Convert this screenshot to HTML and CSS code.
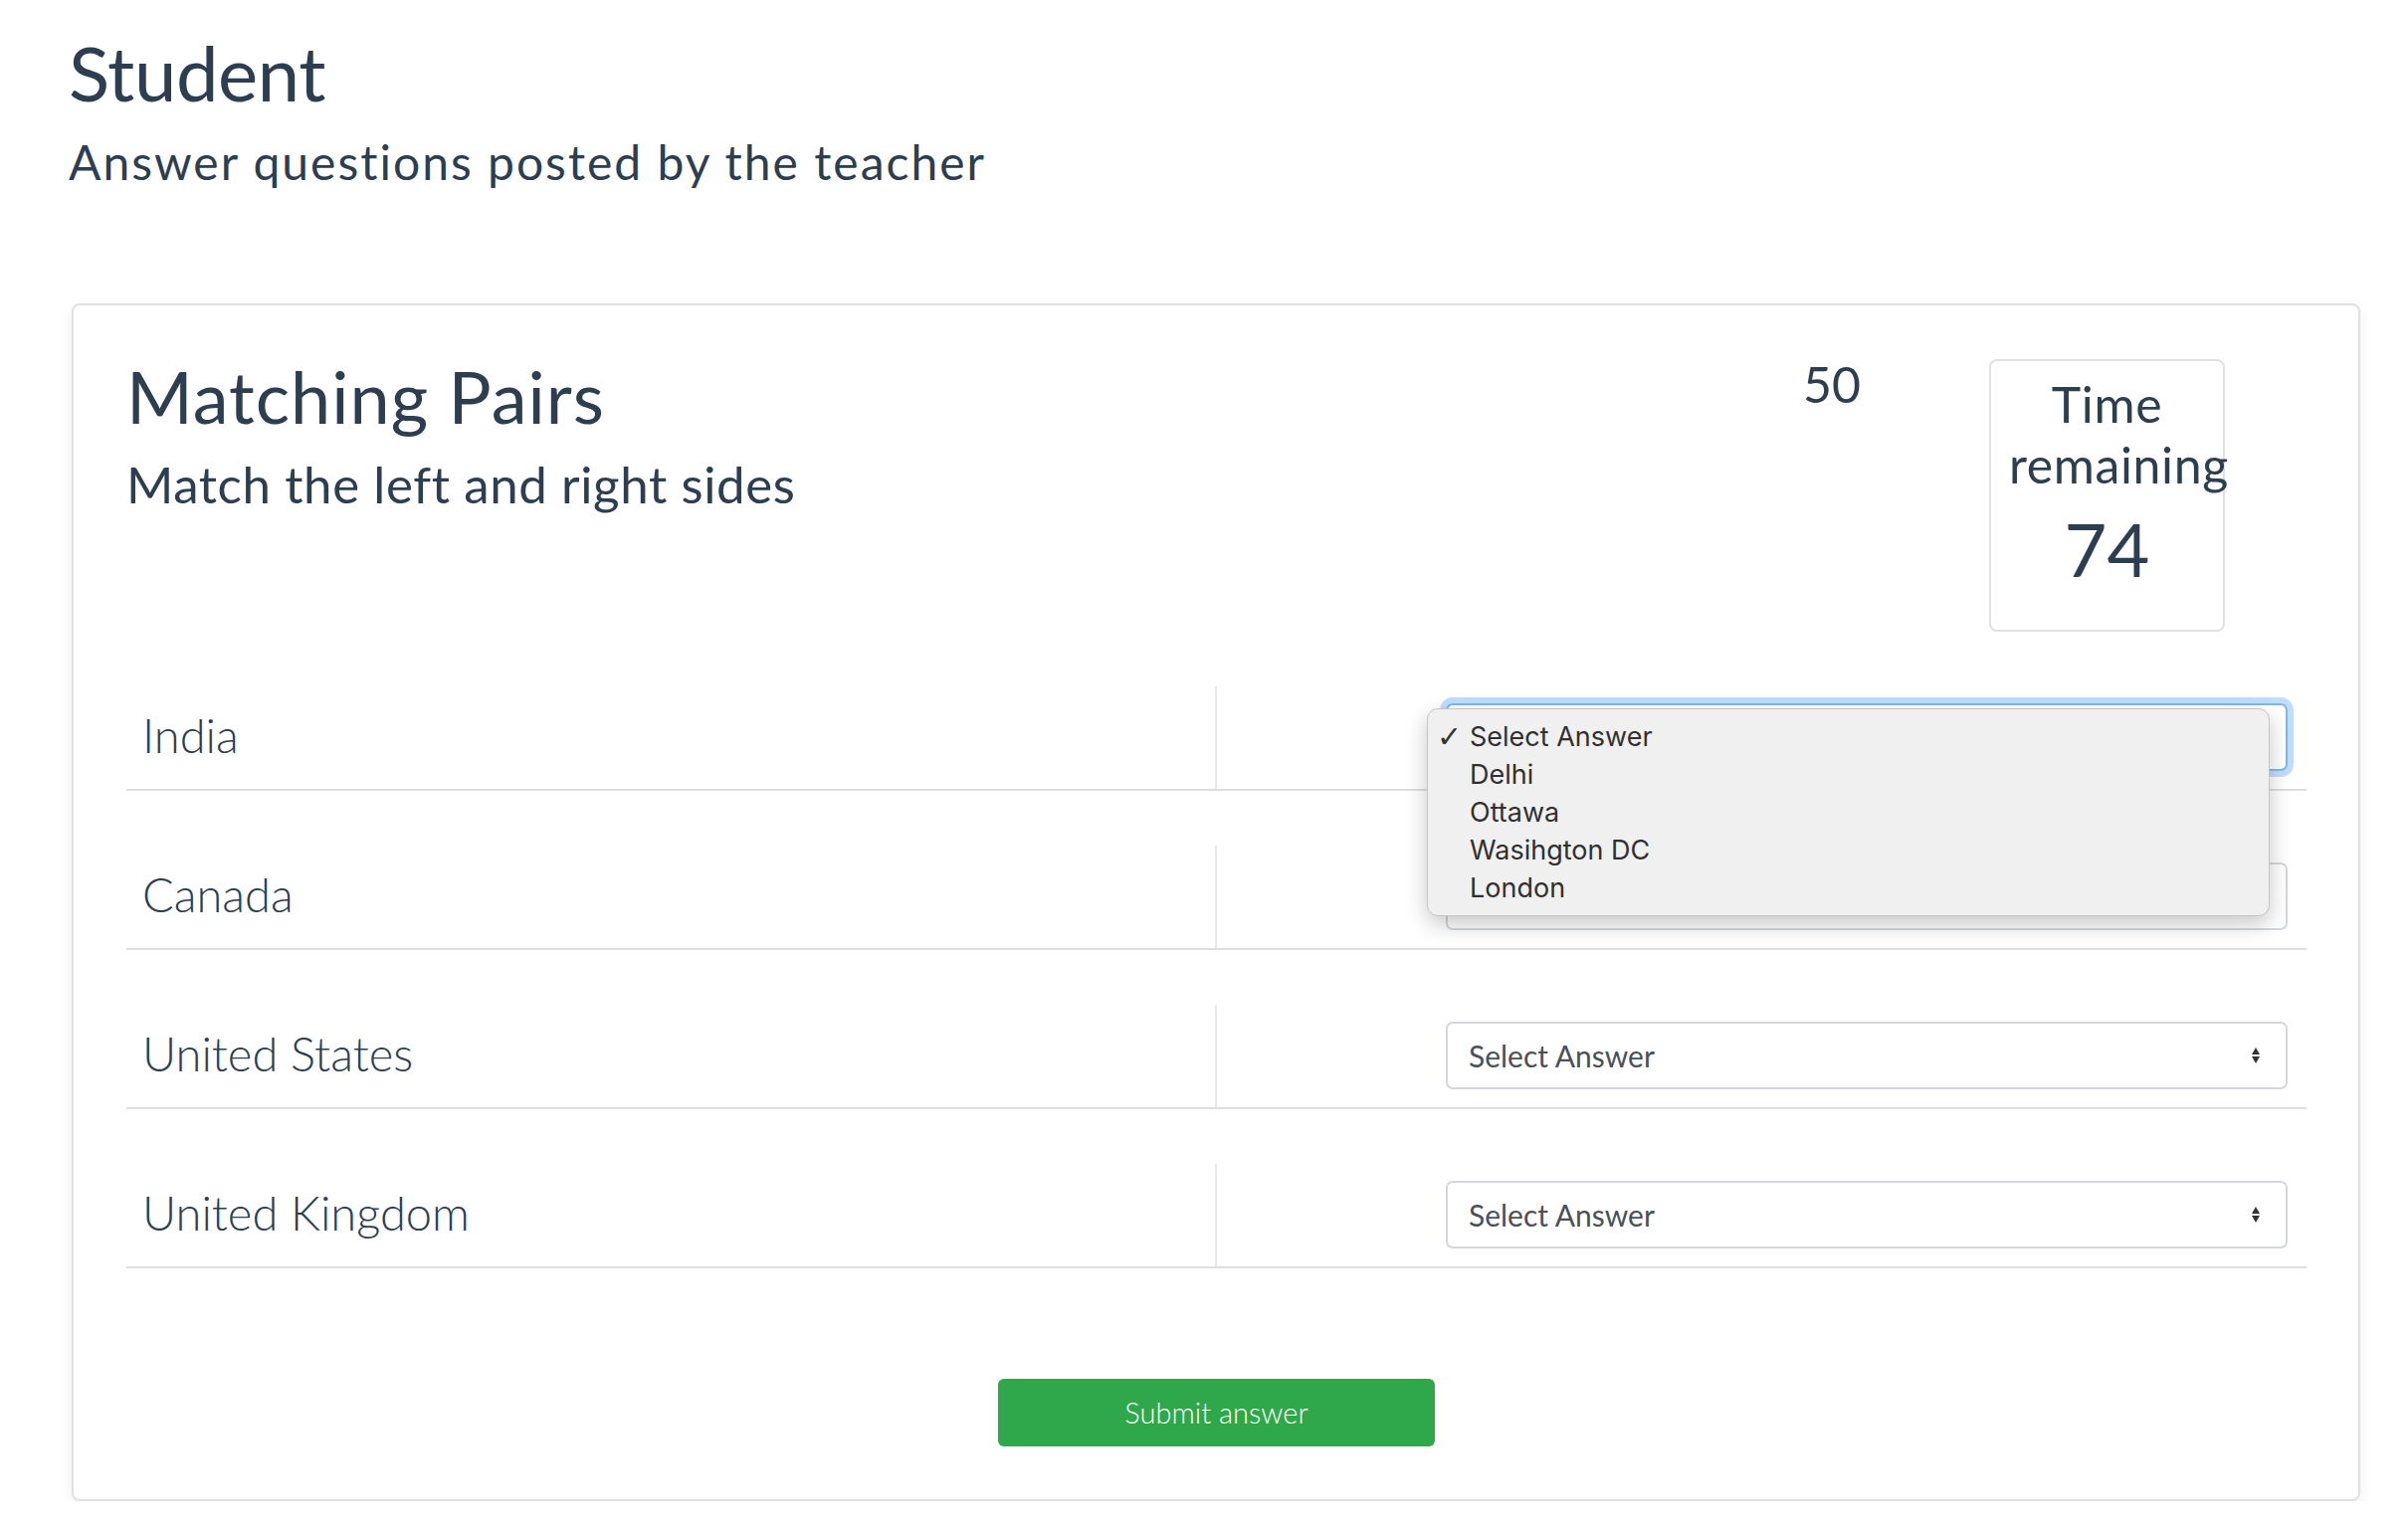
FILE: index.html
```html
<!DOCTYPE html>
<html lang="en">
<head>
<meta charset="utf-8">
<title>Student</title>
<link rel="stylesheet" href="styles.css">
</head>
<body>
<main class="page">
  <header class="page-head">
    <h1 class="page-title">Student</h1>
    <p class="page-sub">Answer questions posted by the teacher</p>
  </header>

  <section class="card">
    <div class="card-head">
      <div class="q-info">
        <h2 class="q-title">Matching Pairs</h2>
        <p class="q-sub">Match the left and right sides</p>
      </div>
      <div class="score">50</div>
      <div class="timer">
        <div class="timer-label">Time remaining</div>
        <div class="timer-value">74</div>
      </div>
    </div>

    <div class="pairs">
      <div class="pair">
        <div class="pair-left">India</div>
        <div class="pair-right">
          <div class="select is-focused">
            <span class="select-text">Select Answer</span>
            <svg class="select-arrows" width="12" height="18" viewBox="0 0 12 18"><path d="M6 1 L10 8 L2 8 Z"/><path d="M6 17 L10 10 L2 10 Z"/></svg>
            <ul class="dropdown">
              <li class="dropdown-item"><span class="check">✓</span>Select Answer</li>
              <li class="dropdown-item"><span class="check"></span>Delhi</li>
              <li class="dropdown-item"><span class="check"></span>Ottawa</li>
              <li class="dropdown-item"><span class="check"></span>Wasihgton DC</li>
              <li class="dropdown-item"><span class="check"></span>London</li>
            </ul>
          </div>
        </div>
      </div>
      <div class="pair">
        <div class="pair-left">Canada</div>
        <div class="pair-right">
          <div class="select">
            <span class="select-text">Select Answer</span>
            <svg class="select-arrows" width="12" height="18" viewBox="0 0 12 18"><path d="M6 1 L10 8 L2 8 Z"/><path d="M6 17 L10 10 L2 10 Z"/></svg>
          </div>
        </div>
      </div>
      <div class="pair">
        <div class="pair-left">United States</div>
        <div class="pair-right">
          <div class="select">
            <span class="select-text">Select Answer</span>
            <svg class="select-arrows" width="12" height="18" viewBox="0 0 12 18"><path d="M6 1 L10 8 L2 8 Z"/><path d="M6 17 L10 10 L2 10 Z"/></svg>
          </div>
        </div>
      </div>
      <div class="pair">
        <div class="pair-left">United Kingdom</div>
        <div class="pair-right">
          <div class="select">
            <span class="select-text">Select Answer</span>
            <svg class="select-arrows" width="12" height="18" viewBox="0 0 12 18"><path d="M6 1 L10 8 L2 8 Z"/><path d="M6 17 L10 10 L2 10 Z"/></svg>
          </div>
        </div>
      </div>
    </div>

    <div class="actions">
      <button class="submit" type="button">Submit answer</button>
    </div>
  </section>
</main>
</body>
</html>
```
FILE: styles.css
```css
* { box-sizing: border-box; }

html, body {
  margin: 0;
  padding: 0;
  background: #ffffff;
}

body {
  font-family: "Lato", "Noto Sans", sans-serif;
  color: #2c3e50;
}

.page {
  padding: 27px 48px 0 72px;
}

.page-head {
  margin-left: -3px;
}

.page-title {
  margin: 0;
  font-size: 76px;
  font-weight: 400;
  line-height: 1.2;
  letter-spacing: -0.4px;
}

.page-sub {
  margin: 16px 0 0;
  font-size: 48px;
  font-weight: 400;
  line-height: 1.2;
  letter-spacing: 2px;
}

.card {
  margin-top: 113px;
  width: 2300px;
  border: 2px solid #e1e1e1;
  border-radius: 8px;
  background: #fff;
  box-shadow: 0 4px 14px rgba(0, 0, 0, 0.07);
  padding: 48px 52px 53px 53px;
}

.card-head {
  display: flex;
  align-items: flex-start;
}

.q-info {
  flex: 1;
}

.q-title {
  margin: 0;
  font-size: 72px;
  font-weight: 400;
  line-height: 1.2;
  letter-spacing: 1px;
}

.q-sub {
  margin: 15px 0 0;
  font-size: 51px;
  font-weight: 400;
  line-height: 1.2;
  letter-spacing: 0.6px;
}

.score {
  margin-top: 1px;
  font-size: 50px;
  line-height: 1.2;
  width: 56px;
  margin-right: 131px;
}

.timer {
  margin-top: 6px;
  margin-right: 82px;
  width: 237px;
  height: 274px;
  border: 2px solid #e1e1e1;
  border-radius: 8px;
  padding: 13px 18px 0;
  text-align: center;
}

.timer-label {
  font-size: 50px;
  line-height: 61px;
  letter-spacing: 0.6px;
}

.timer-value {
  margin-top: 10px;
  font-size: 74px;
  line-height: 1.2;
}

.pairs {
  margin-top: 55px;
  display: flex;
  flex-direction: column;
  gap: 55px;
}

.pair {
  display: grid;
  grid-template-columns: 1fr 1fr;
  height: 105px;
  border-bottom: 2px solid #dedede;
}

.pair-left {
  display: flex;
  align-items: center;
  padding: 0 0 5px 16px;
  font-size: 47px;
  font-weight: 300;
  line-height: 1.2;
  border-right: 2px solid #e8e8e8;
}

.pair-right {
  display: flex;
  align-items: center;
  justify-content: flex-end;
  padding-right: 19px;
}

.select {
  position: relative;
  width: 846px;
  height: 68px;
  border: 2px solid #d3d7dc;
  border-radius: 7px;
  background: #fff;
  display: flex;
  align-items: center;
  justify-content: space-between;
  padding: 0 24px 0 21px;
  font-size: 30px;
  font-weight: 400;
  color: #4a5158;
}

.select.is-focused {
  border-color: #80b6f0;
  box-shadow: 0 0 0 6px rgba(0, 123, 255, 0.25);
}

.select-arrows {
  fill: #2f3337;
}

.dropdown {
  position: absolute;
  left: -21px;
  top: 3px;
  width: 847px;
  margin: 0;
  padding: 8px 0 9px;
  list-style: none;
  background: #f0f0f0;
  border: 1px solid #c6c6c6;
  border-radius: 11px;
  box-shadow: 0 8px 22px rgba(0, 0, 0, 0.22);
  z-index: 5;
}

.dropdown-item {
  display: flex;
  align-items: center;
  height: 38px;
  padding-left: 9px;
  font-family: "Inter", "Liberation Sans", sans-serif;
  font-size: 27px;
  color: #303030;
}

.check {
  display: inline-block;
  width: 33px;
  font-family: "DejaVu Sans", sans-serif;
  font-size: 30px;
  color: #333;
}

.actions {
  margin-top: 111px;
  display: flex;
  justify-content: center;
}

.submit {
  width: 439px;
  height: 68px;
  border: none;
  border-radius: 6px;
  background: #2fa84b;
  color: #fff;
  font-family: "Lato", "Noto Sans", sans-serif;
  font-size: 29px;
  font-weight: 300;
  cursor: pointer;
}
```
